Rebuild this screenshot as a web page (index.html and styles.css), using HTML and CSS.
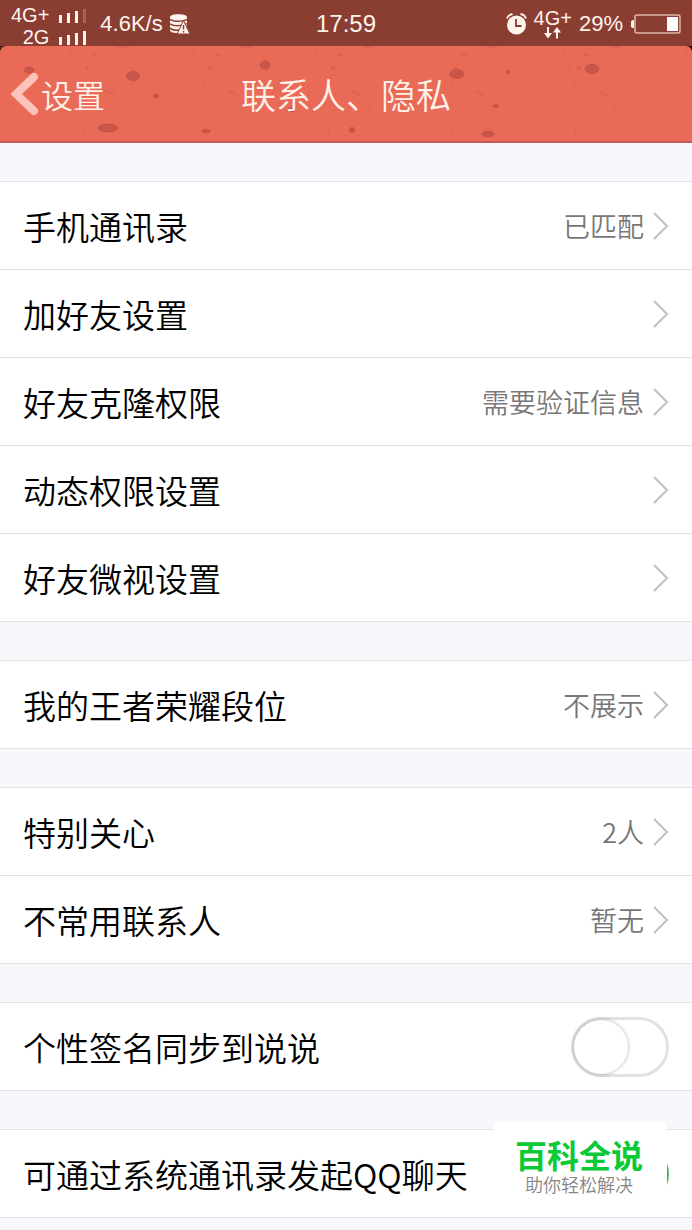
FILE: index.html
```html
<!DOCTYPE html>
<html lang="zh-CN">
<head>
    <meta charset="UTF-8">
    <meta name="viewport" content="width=device-width, initial-scale=1.0">
    <title>联系人、隐私</title>
    <link rel="stylesheet" href="styles.css">
</head>
<body>

    <div class="top">
        <!-- Status bar -->
        <div class="status-bar">
            <div class="status-left">
                <div class="sims">
                    <div class="sim">
                        <span>4G+</span>
                        <svg width="27" height="16" viewBox="0 0 27 16" fill="#fff3ee">
                            <rect x="0" y="8" width="3" height="8"/>
                            <rect x="8" y="6" width="3" height="10"/>
                            <rect x="16" y="4" width="3" height="12"/>
                            <rect x="24" y="2" width="3" height="14" opacity="0.22"/>
                        </svg>
                    </div>
                    <div class="sim">
                        <span>2G</span>
                        <svg width="27" height="16" viewBox="0 0 27 16" fill="#fff3ee">
                            <rect x="0" y="8" width="3" height="8"/>
                            <rect x="8" y="6" width="3" height="10"/>
                            <rect x="16" y="4" width="3" height="12"/>
                            <rect x="24" y="2" width="3" height="14"/>
                        </svg>
                    </div>
                </div>
                <span class="speed">4.6K/s</span>
                <svg width="20" height="20" viewBox="0 0 20 20">
                    <path d="M0 3.5C0 1 4 .3 8.500 .3S17 1 17 3.500v12.500C17 18.500 13 19 8.500 19S0 18.500 0 16z" fill="#fff3ee"/>
                    <path d="M0 5.200C3 7.800 14 7.800 17 5.200M0 9.700C3 12.300 12 12.300 17 9.700M0 14.200C3 16.500 8 16.500 11 15.500" fill="none" stroke="#8a3e32" stroke-width="1.500"/>
                    <path d="M13.500 6.500L20 20H7z" fill="#fff3ee" stroke="#8a3e32" stroke-width="1"/>
                    <path d="M13.500 11v4.500M13.500 17v1.500" stroke="#8a3e32" stroke-width="1.500"/>
                </svg>
            </div>
            <span class="clock">17:59</span>
            <div class="status-right">
                <svg width="21" height="22" viewBox="0 0 21 22">
                    <circle cx="10.500" cy="12" r="9.500" fill="#fff3ee"/>
                    <path d="M1 5.500Q2.500 1.500 6.500 1M20 5.500Q18.500 1.500 14.500 1" fill="none" stroke="#fff3ee" stroke-width="1.800"/>
                    <path d="M10 6v7h5.500" fill="none" stroke="#8a3e32" stroke-width="1.800"/>
                </svg>
                <div class="network">
                    <span>4G+</span>
                    <svg width="17" height="12" viewBox="0 0 17 12" fill="#fff3ee">
                        <path d="M3 0h2v6h3l-4 5.500L0 6h3zM12 11.500h2v-6h3L13 0 9 5.500h3z"/>
                    </svg>
                </div>
                <span class="percent">29%</span>
                <svg width="51" height="20" viewBox="0 0 51 20">
                    <path d="M4 6Q1 6 1 8v4q0 2 3 2z" fill="#fff3ee"/>
                    <rect x="5" y="1" width="45" height="18" rx="2" fill="none" stroke="#dfb5a9" stroke-width="1.500"/>
                    <rect x="37" y="3" width="11" height="14" fill="#fff"/>
                </svg>
            </div>
        </div>

        <!-- Title bar -->
        <header class="title-bar">
            <svg class="texture" width="100%" height="100%" aria-hidden="true">
                <defs>
                    <pattern id="specks" x="92" width="123" height="97" patternUnits="userSpaceOnUse">
                        <g fill="#c9483c">
                            <ellipse cx="3" cy="9" rx="4" ry="1.500" opacity="0.25" transform="rotate(25 3 9)"/>
                            <ellipse cx="102" cy="7" rx="1.500" ry="2.500" opacity="0.15"/>
                            <ellipse cx="31" cy="1" rx="6" ry="1" opacity="0.3"/>
                            <ellipse cx="108" cy="22" rx="1.500" ry="1.500" opacity="0.2"/>
                            <ellipse cx="118" cy="22" rx="2" ry="1.500" opacity="0.35"/>
                            <ellipse cx="113" cy="39" rx="1.500" ry="1.500" opacity="0.25"/>
                            <ellipse cx="18" cy="47" rx="6" ry="1" opacity="0.25" transform="rotate(25 18 47)"/>
                            <ellipse cx="31" cy="60" rx="1.500" ry="1.500" opacity="0.2"/>
                            <ellipse cx="94" cy="49" rx="1" ry="1.500" opacity="0.25"/>
                            <ellipse cx="108" cy="80" rx="1" ry="1.500" opacity="0.2"/>
                            <ellipse cx="114" cy="87" rx="1.500" ry="1.500" opacity="0.3"/>
                        </g>
                    </pattern>
                </defs>
                <rect width="100%" height="100%" fill="url(#specks)"/>
                <g fill="#c9564a" stroke="#b9473c" stroke-width="0.500">
                    <ellipse cx="29" cy="24" rx="5" ry="3"/>
                    <ellipse cx="133" cy="30" rx="6.500" ry="4.500"/>
                    <ellipse cx="156" cy="50" rx="2.500" ry="2"/>
                    <ellipse cx="108" cy="82" rx="9.500" ry="4"/>
                    <ellipse cx="206" cy="85" rx="4.500" ry="1.500"/>
                    <ellipse cx="265" cy="19" rx="5" ry="4"/>
                    <ellipse cx="291" cy="64" rx="4" ry="2"/>
                    <ellipse cx="352" cy="84" rx="3" ry="2.500"/>
                    <ellipse cx="457" cy="28" rx="7" ry="4.500"/>
                    <ellipse cx="508" cy="26" rx="2" ry="1.500"/>
                    <ellipse cx="592" cy="23" rx="7" ry="4.500"/>
                    <ellipse cx="496" cy="60" rx="2.500" ry="1.500"/>
                    <ellipse cx="488" cy="88" rx="6" ry="3"/>
                </g>
            </svg>
            <a class="back" href="#">
                <svg width="30" height="44" viewBox="0 0 30 44">
                    <path d="M23 5L5 22l18 17" fill="none" stroke="#fbc3ba" stroke-width="8" stroke-linejoin="miter" stroke-linecap="round"/>
                </svg>
                <span>设置</span>
            </a>
            <h1>联系人、隐私</h1>
        </header>
    </div>

    <main>
        <ul class="group">
            <li><a class="row" href="#"><span class="label">手机通讯录</span><span class="value">已匹配</span><svg class="arrow" viewBox="0 0 16 28"><path d="M1 1l13 13L1 27"/></svg></a></li>
            <li><a class="row" href="#"><span class="label">加好友设置</span><svg class="arrow" viewBox="0 0 16 28"><path d="M1 1l13 13L1 27"/></svg></a></li>
            <li><a class="row" href="#"><span class="label">好友克隆权限</span><span class="value">需要验证信息</span><svg class="arrow" viewBox="0 0 16 28"><path d="M1 1l13 13L1 27"/></svg></a></li>
            <li><a class="row" href="#"><span class="label">动态权限设置</span><svg class="arrow" viewBox="0 0 16 28"><path d="M1 1l13 13L1 27"/></svg></a></li>
            <li><a class="row" href="#"><span class="label">好友微视设置</span><svg class="arrow" viewBox="0 0 16 28"><path d="M1 1l13 13L1 27"/></svg></a></li>
        </ul>

        <ul class="group">
            <li><a class="row" href="#"><span class="label">我的王者荣耀段位</span><span class="value">不展示</span><svg class="arrow" viewBox="0 0 16 28"><path d="M1 1l13 13L1 27"/></svg></a></li>
        </ul>

        <ul class="group">
            <li><a class="row" href="#"><span class="label">特别关心</span><span class="value">2人</span><svg class="arrow" viewBox="0 0 16 28"><path d="M1 1l13 13L1 27"/></svg></a></li>
            <li><a class="row" href="#"><span class="label">不常用联系人</span><span class="value">暂无</span><svg class="arrow" viewBox="0 0 16 28"><path d="M1 1l13 13L1 27"/></svg></a></li>
        </ul>

        <div class="group">
            <div class="row">
                <label class="label" for="sync">个性签名同步到说说</label>
                <input class="switch" type="checkbox" id="sync">
            </div>
        </div>

        <div class="group">
            <div class="row">
                <label class="label" for="chat">可通过系统通讯录发起QQ聊天</label>
                <input class="switch" type="checkbox" id="chat" checked>
            </div>
        </div>
    </main>

    <div class="badge">
        <strong>百科全说</strong>
        <span>助你轻松解决</span>
    </div>

</body>
</html>
```
FILE: styles.css
```css
/* General styling */
body {
    font-family: "Noto Sans CJK SC", sans-serif;
    font-weight: 350;
    margin: 0;
    background-color: #f7f8fb;
    color: #000;
}

a {
    color: inherit;
    text-decoration: none;
}

svg {
    display: block;
    flex-shrink: 0;
}

.top {
    background-color: #1a0806;
}

/* Status bar */
.status-bar {
    display: grid;
    grid-template-columns: 1fr auto 1fr;
    align-items: center;
    height: 46px;
    padding: 0 11px;
    background-color: #8a3e32;
    color: #fff3ee;
    font-family: "Liberation Sans", sans-serif;
    font-size: 22px;
}

.status-left,
.status-right {
    display: flex;
    align-items: center;
    gap: 7px;
}

.status-right {
    justify-content: flex-end;
}

.sims {
    margin-right: 7px;
    padding-top: 4px;
    font-size: 20px;
    line-height: 22px;
}

.sim {
    display: flex;
    justify-content: flex-end;
    align-items: center;
    gap: 10px;
}

.clock {
    font-size: 24px;
}

.network {
    display: flex;
    flex-direction: column;
    align-items: center;
    font-size: 20px;
    line-height: 18px;
}

/* Title bar */
.title-bar {
    position: relative;
    display: grid;
    grid-template-columns: 1fr auto 1fr;
    align-items: center;
    height: 97px;
    padding: 0 11px;
    box-sizing: border-box;
    border-bottom: 2px solid #c45a54;
    border-radius: 6px 6px 0 0;
    background-color: #e96a57;
    color: #fff0e8;
}

.texture {
    position: absolute;
    top: 0;
    left: 0;
}

.back {
    position: relative;
    display: flex;
    align-items: center;
    font-size: 32px;
}

.title-bar h1 {
    position: relative;
    margin: 0;
    font-size: 35px;
    font-weight: 350;
}

/* Setting groups */
.group {
    margin: 38px 0 0;
    padding: 0;
    list-style: none;
    border-top: 1px solid #e2e4e6;
    background-color: #fff;
}

.row {
    display: flex;
    align-items: center;
    height: 88px;
    padding: 0 23px;
    box-sizing: border-box;
    border-bottom: 1px solid #e0e1e3;
}

.label {
    margin-right: auto;
    font-size: 33px;
}

.value {
    margin-right: 9px;
    font-size: 27px;
    color: #777;
}

.arrow {
    width: 16px;
    height: 28px;
    fill: none;
    stroke: #bfbfbf;
    stroke-width: 2;
}

/* Switch */
.switch {
    appearance: none;
    display: flex;
    width: 98px;
    height: 60px;
    margin: 0;
    box-sizing: border-box;
    border: 3px solid #e2e2e2;
    border-radius: 30px;
    background-color: #fff;
}

.switch::before {
    content: "";
    width: 54px;
    height: 54px;
    border-radius: 50%;
    background-color: #fff;
    box-shadow: 0 0 4px rgba(0, 0, 0, 0.3);
}

.switch:checked {
    justify-content: flex-end;
    border-color: #4cc35a;
    background-color: #4cc35a;
}

/* Badge over the page corner */
.badge {
    position: fixed;
    right: 25px;
    bottom: 24px;
    display: flex;
    flex-direction: column;
    align-items: center;
    padding: 14px 24px 10px 22px;
    background-color: #fff;
    white-space: nowrap;
}

.badge strong {
    font-size: 32px;
    line-height: 36px;
    color: #0cc936;
}

.badge span {
    font-size: 18px;
    line-height: 24px;
    color: #858585;
}
```
